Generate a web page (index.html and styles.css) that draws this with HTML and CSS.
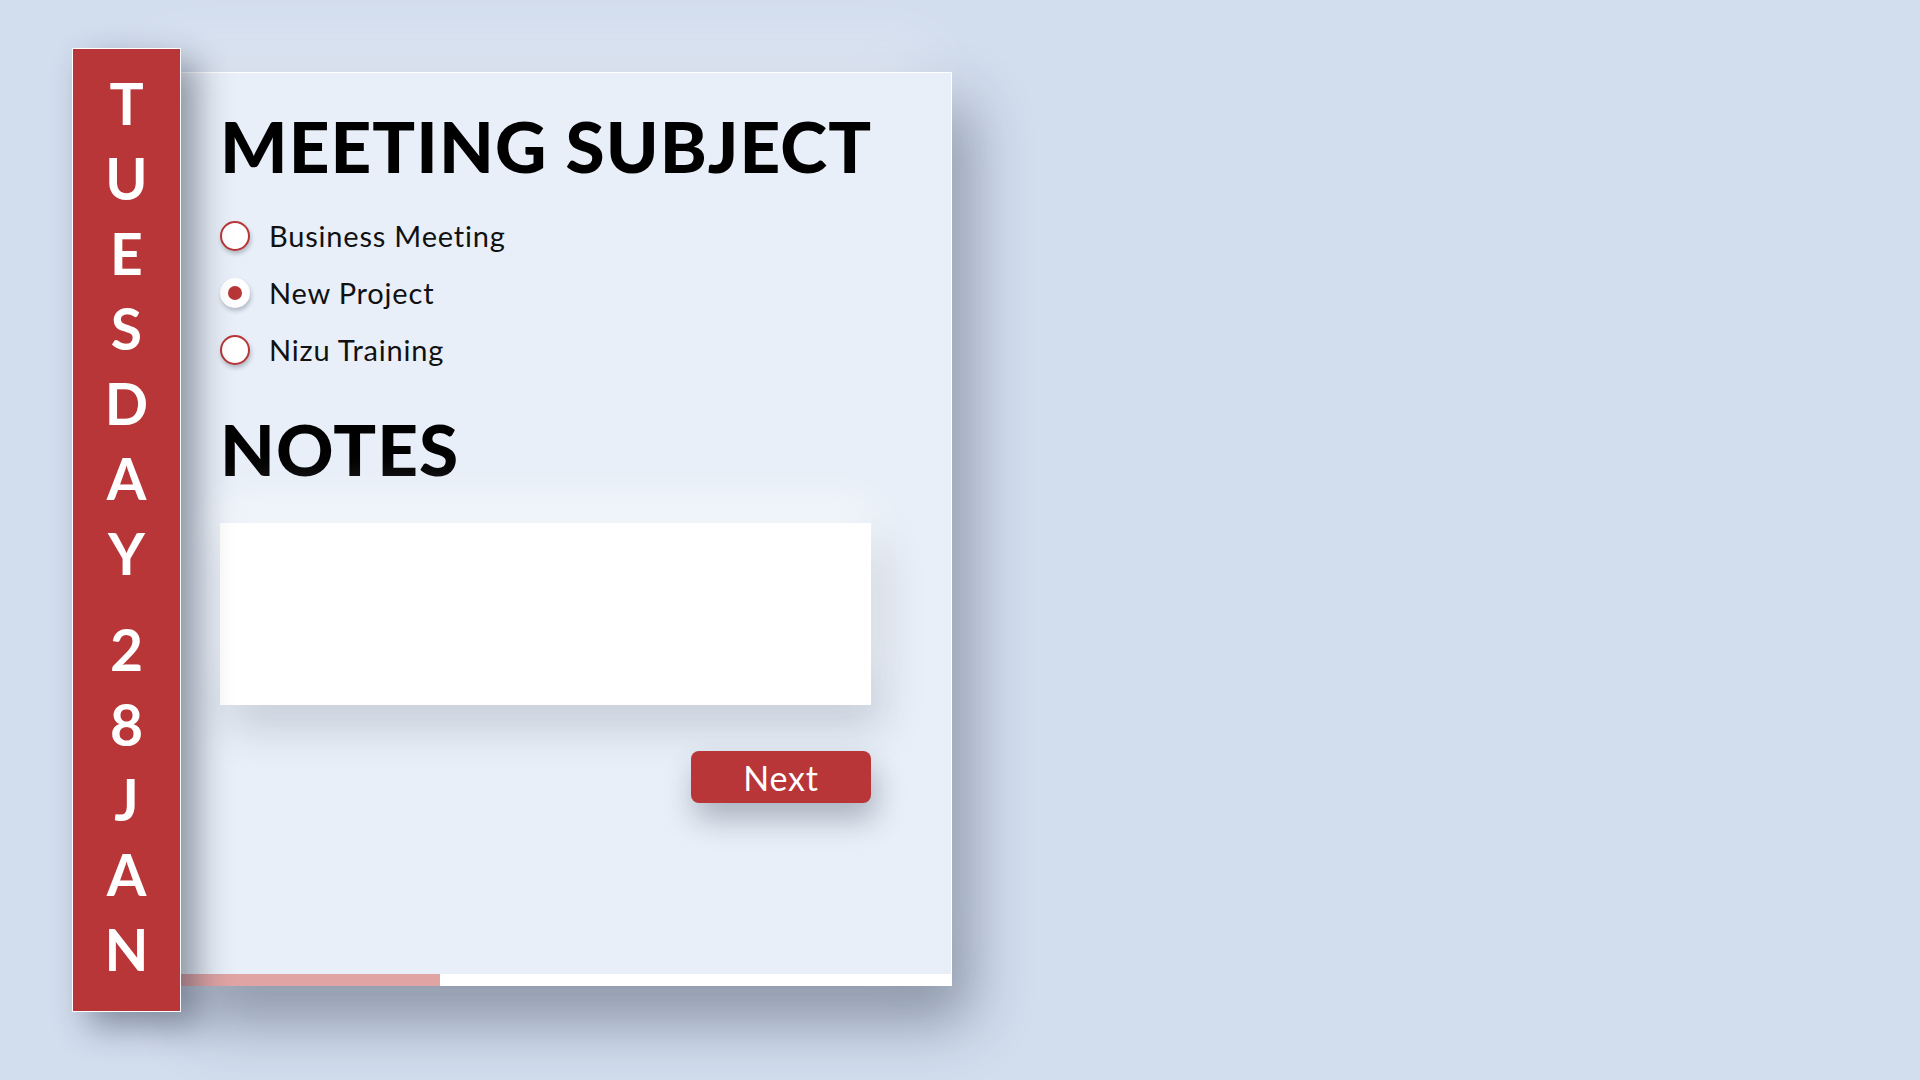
FILE: index.html
```html
<!DOCTYPE html>
<html lang="en">
<head>
<meta charset="utf-8">
<title>Meeting</title>
<link rel="stylesheet" href="styles.css">
</head>
<body>
<div class="stage">
  <aside class="date">
    <div class="word word-day"><span>T</span><span>U</span><span>E</span><span>S</span><span>D</span><span>A</span><span>Y</span></div>
    <div class="word"><span>2</span><span>8</span></div>
    <div class="word"><span>J</span><span>A</span><span>N</span></div>
  </aside>
  <main class="card">
    <h1 class="heading">MEETING SUBJECT</h1>
    <ul class="options">
      <li class="option"><span class="radio"></span><span class="label">Business Meeting</span></li>
      <li class="option selected"><span class="radio"></span><span class="label">New Project</span></li>
      <li class="option"><span class="radio"></span><span class="label">Nizu Training</span></li>
    </ul>
    <h2 class="heading notes-heading">NOTES</h2>
    <textarea class="notes" aria-label="Notes"></textarea>
    <div class="actions"><button class="next" type="button">Next</button></div>
    <div class="progress"><div class="progress-fill" style="width:33.6%"></div></div>
  </main>
</div>
</body>
</html>
```
FILE: styles.css
```css
html, body {
  margin: 0;
  padding: 0;
}
body {
  background: #d2ddee;
  width: 1920px;
  height: 1080px;
  overflow: hidden;
  font-family: Lato, "Liberation Sans", sans-serif;
}
.stage {
  display: flex;
  align-items: flex-start;
  padding: 48px 0 0 72px;
}
.date {
  position: relative;
  z-index: 2;
  box-sizing: border-box;
  width: 109px;
  height: 964px;
  border: 1px solid #ffffff;
  background: #b83637;
  padding-top: 17px;
  display: flex;
  flex-direction: column;
  align-items: center;
  box-shadow: 16px 14px 32px rgba(30, 40, 60, 0.45);
  color: #ffffff;
  font-weight: 700;
  font-size: 57px;
}
.word {
  display: flex;
  flex-direction: column;
  align-items: center;
}
.word span {
  display: block;
  line-height: 75px;
  height: 75px;
}
.word-day {
  margin-bottom: 21px;
}
.card {
  position: relative;
  z-index: 1;
  box-sizing: border-box;
  width: 771px;
  height: 914px;
  margin-top: 24px;
  background: #e8eff8;
  border-top: 1px solid #ffffff;
  border-right: 1px solid #ffffff;
  padding: 37px 80px 0 39px;
  display: flex;
  flex-direction: column;
  box-shadow: -24px -24px 60px rgba(255, 255, 255, 0.35), 16px 34px 56px rgba(30, 40, 60, 0.42);
}
.heading {
  margin: 0;
  font-size: 71px;
  line-height: 71px;
  height: 71px;
  font-weight: 900;
  color: #000000;
  letter-spacing: 1.1px;
  white-space: nowrap;
}
.options {
  list-style: none;
  margin: 26px 0 0;
  padding: 0;
}
.option {
  display: flex;
  align-items: center;
  gap: 19px;
  height: 57px;
}
.radio {
  box-sizing: border-box;
  width: 30px;
  height: 30px;
  flex: none;
  border-radius: 50%;
  background: #ffffff;
  border: 2px solid #b83637;
  box-shadow: 1px 3px 4px rgba(40, 50, 70, 0.28);
  display: flex;
  align-items: center;
  justify-content: center;
}
.option.selected .radio {
  border-color: #ffffff;
}
.option.selected .radio::after {
  content: "";
  width: 14px;
  height: 14px;
  border-radius: 50%;
  background: #b83637;
}
.label {
  font-size: 29px;
  color: #111111;
  letter-spacing: 0.8px;
}
.notes-heading {
  margin-top: 35px;
}
.notes {
  display: block;
  box-sizing: border-box;
  margin: 39px 0 0;
  width: 100%;
  height: 182px;
  border: none;
  outline: none;
  resize: none;
  background: #ffffff;
  box-shadow: 0 -22px 40px rgba(255, 255, 255, 0.55), 10px 22px 40px rgba(40, 50, 70, 0.18);
}
.actions {
  display: flex;
  justify-content: flex-end;
  margin-top: 46px;
}
.next {
  width: 180px;
  height: 52px;
  border: none;
  border-radius: 8px;
  background: #b83637;
  color: #ffffff;
  font-family: Lato, "Liberation Sans", sans-serif;
  font-size: 34px;
  font-weight: 400;
  letter-spacing: 0.8px;
  padding: 0;
  box-shadow: 4px 16px 30px rgba(40, 50, 70, 0.32);
}
.progress {
  margin: auto -80px 0 -39px;
  height: 12px;
  background: #ffffff;
}
.progress-fill {
  height: 100%;
  background: #e0a4a4;
}
```
